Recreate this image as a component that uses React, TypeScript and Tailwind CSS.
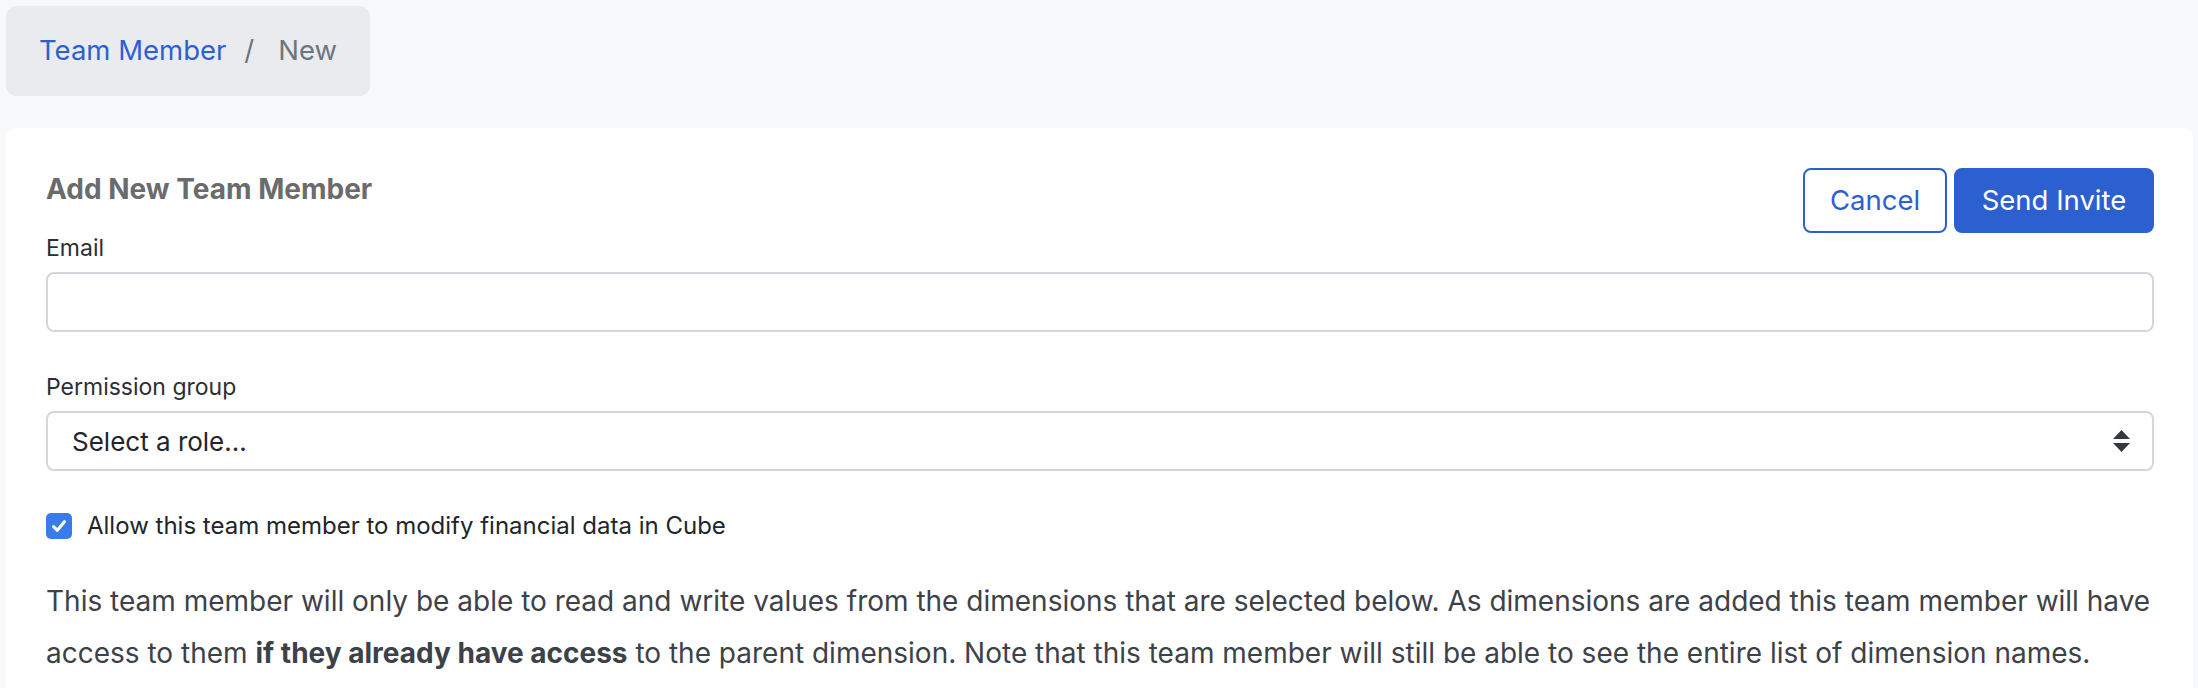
import { type ReactNode } from 'react';

// Sizes below are taken straight from the screenshot (it is rendered at ~1.4x)
const FONT = { fontFamily: 'Inter, "Noto Sans", "Liberation Sans", sans-serif' };

function Breadcrumb({ items }: { items: { label: string; href?: string }[] }) {
  return (
    <nav className="inline-flex items-center h-[90px] px-[33px] rounded-[10px] bg-[#eaebee] text-[27.5px]">
      {items.map((item, i) => (
        <span key={item.label} className="flex items-center">
          {i > 0 && <span className="pl-[18px] pr-[24px] text-[#6c757d]">/</span>}
          <span className={item.href ? 'text-[#2d5fd2]' : 'text-[#6c757d]'}>{item.label}</span>
        </span>
      ))}
    </nav>
  );
}

function Label({ children }: { children: ReactNode }) {
  return <label className="block text-[23px] leading-[31px] text-[#2b2f33]">{children}</label>;
}

function SelectArrows() {
  return (
    <svg width="17" height="22" viewBox="0 0 17 22" className="shrink-0">
      <path d="M8.5 0 L17 9 H0 Z" fill="#343a40" />
      <path d="M0 13 H17 L8.5 22 Z" fill="#343a40" />
    </svg>
  );
}

export default function App() {
  return (
    <div style={FONT} className="min-h-screen w-full bg-[#f8f9fb] px-[6px] pt-[6px] pr-[5px]">
      <Breadcrumb items={[{ label: 'Team Member', href: '#' }, { label: 'New' }]} />

      <div className="mt-[32px] bg-white rounded-[10px] pt-[40px] pb-[40px] pl-[40px] pr-[39px]">
        <div className="flex items-start justify-between">
          <h2 className="text-[28px] leading-[42px] font-bold text-[#6b6b6b]">Add New Team Member</h2>
          <div className="flex gap-[7px]">
            <button className="h-[65px] w-[144px] rounded-[8px] border-2 border-[#2d5fd2] bg-white text-[27.5px] text-[#2d5fd2]">
              Cancel
            </button>
            <button className="h-[65px] w-[200px] rounded-[8px] bg-[#2c5fcf] text-[27.5px] text-white">
              Send Invite
            </button>
          </div>
        </div>

        <Label>Email</Label>
        <input
          type="email"
          className="mt-[8px] block w-full h-[60px] rounded-[8px] border-2 border-[#d3d7dc] px-[24px] text-[26px] outline-none"
        />

        <div className="mt-[40px]">
          <Label>Permission group</Label>
          <div className="mt-[8px] flex items-center justify-between h-[60px] rounded-[8px] border-2 border-[#d3d7dc] pl-[24px] pr-[22px]">
            <span className="text-[26px] text-[#212529]">Select a role...</span>
            <SelectArrows />
          </div>
        </div>

        <label className="mt-[40px] flex items-center gap-[15px]">
          <span className="flex items-center justify-center w-[26px] h-[26px] rounded-[5px] bg-[#3a7bec]">
            <svg width="18" height="18" viewBox="0 0 16 16">
              <path d="M3.2 8.6 L6.5 11.8 L12.8 4.2" fill="none" stroke="white" strokeWidth="2.8" strokeLinecap="round" strokeLinejoin="round" />
            </svg>
          </span>
          <span className="text-[24px] leading-[30px] text-[#212529]">Allow this team member to modify financial data in Cube</span>
        </label>

        <p className="mt-[34px] text-[28px] leading-[52px] text-[#3d4148]">
          This team member will only be able to read and write values from the dimensions that are selected below. As
          dimensions are added this team member will have access to them <b className="font-bold">if they already have access</b> to the
          parent dimension. Note that this team member will still be able to see the entire list of dimension names.
        </p>
      </div>
    </div>
  );
}
